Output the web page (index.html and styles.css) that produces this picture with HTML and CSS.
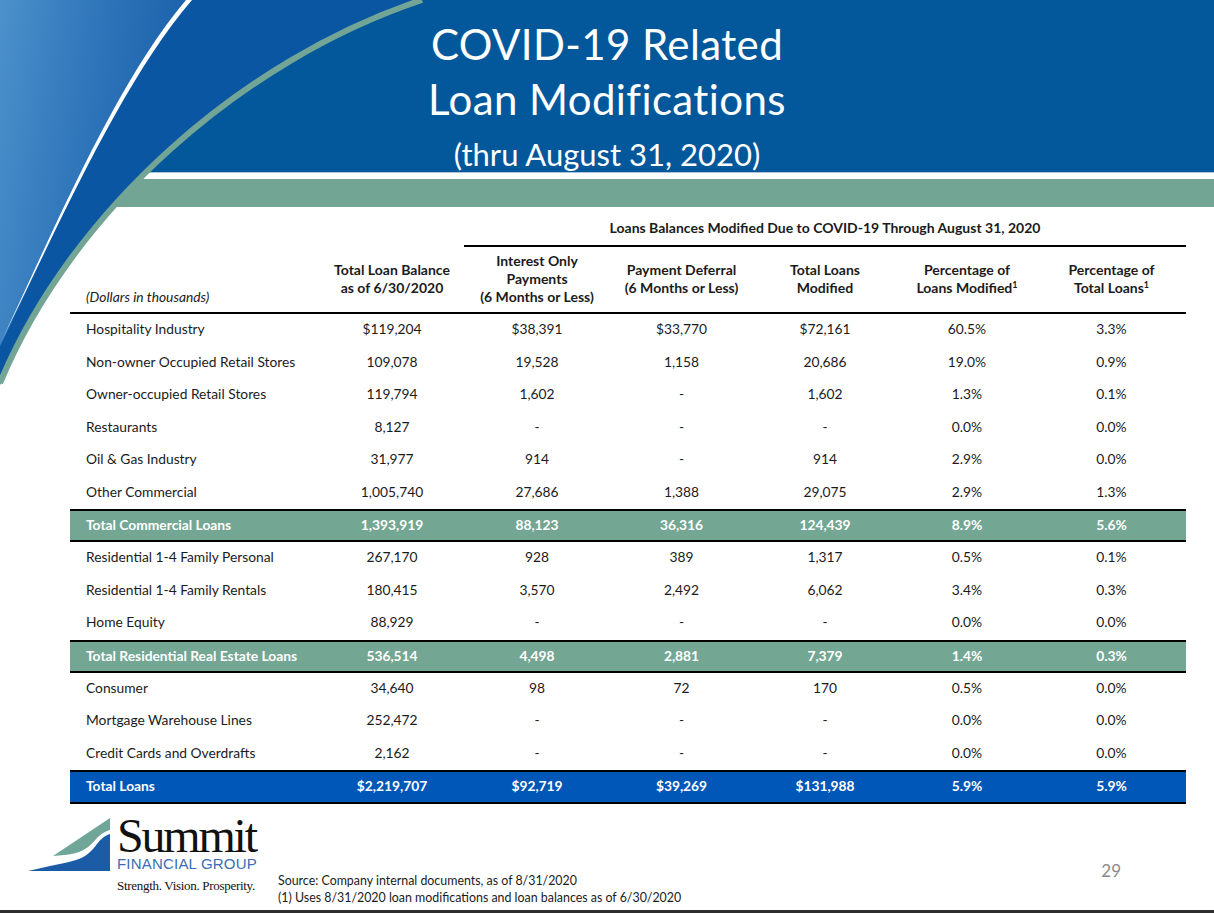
FILE: index.html
```html
<!DOCTYPE html>
<html lang="en">
<head>
<meta charset="utf-8">
<title>COVID-19 Related Loan Modifications</title>
<link rel="stylesheet" href="styles.css">
</head>
<body>
<div class="slide">
  <svg class="swoosh" viewBox="0 0 430 400" width="430" height="400" aria-hidden="true">
    <defs>
      <linearGradient id="lg" x1="0" y1="0" x2="1" y2="0.25">
        <stop offset="0" stop-color="#4c91cb"/>
        <stop offset="0.55" stop-color="#2c73b8"/>
        <stop offset="1" stop-color="#1960aa"/>
      </linearGradient>
    </defs>
    <path d="M0,0 H424 C244,60 74,210 0,385 Z" fill="#0a56a2"/>
    <path d="M0,0 H190 C121,80 61,220 4,338 L0,346 Z" fill="url(#lg)"/>
    <path d="M186,0 C118,80 58,220 2,340 C61,220 123,80 192,0 Z" fill="#ffffff"/>
    <path d="M422,0 C242,60 72,210 0,383" stroke="#72a596" stroke-width="6" fill="none"/>
  </svg>

  <header class="hero">
    <h1 class="title">COVID-19 Related<br>Loan Modifications</h1>
    <p class="subtitle">(thru August 31, 2020)</p>
  </header>
  <div class="rule-white"></div>
  <div class="rule-green"></div>

  <main class="content">
    <table class="loans">
      <colgroup>
        <col class="c-label">
        <col class="c-bal">
        <col class="c-io">
        <col class="c-def">
        <col class="c-tot">
        <col class="c-pm">
        <col class="c-pt">
      </colgroup>
      <thead>
        <tr class="super">
          <th colspan="2"></th>
          <th colspan="5" class="super-title">Loans Balances Modified Due to COVID-19 Through August 31, 2020</th>
        </tr>
        <tr class="cols">
          <th class="label"><em>(Dollars in thousands)</em></th>
          <th>Total Loan Balance<br>as of 6/30/2020</th>
          <th>Interest Only<br>Payments<br>(6 Months or Less)</th>
          <th>Payment Deferral<br>(6 Months or Less)</th>
          <th>Total Loans<br>Modified</th>
          <th>Percentage of<br>Loans Modified<sup>1</sup></th>
          <th>Percentage of<br>Total Loans<sup>1</sup></th>
        </tr>
      </thead>
      <tbody>
        <tr><td>Hospitality Industry</td><td>$119,204</td><td>$38,391</td><td>$33,770</td><td>$72,161</td><td>60.5%</td><td>3.3%</td></tr>
        <tr><td>Non-owner Occupied Retail Stores</td><td>109,078</td><td>19,528</td><td>1,158</td><td>20,686</td><td>19.0%</td><td>0.9%</td></tr>
        <tr><td>Owner-occupied Retail Stores</td><td>119,794</td><td>1,602</td><td>-</td><td>1,602</td><td>1.3%</td><td>0.1%</td></tr>
        <tr><td>Restaurants</td><td>8,127</td><td>-</td><td>-</td><td>-</td><td>0.0%</td><td>0.0%</td></tr>
        <tr><td>Oil &amp; Gas Industry</td><td>31,977</td><td>914</td><td>-</td><td>914</td><td>2.9%</td><td>0.0%</td></tr>
        <tr><td>Other Commercial</td><td>1,005,740</td><td>27,686</td><td>1,388</td><td>29,075</td><td>2.9%</td><td>1.3%</td></tr>
        <tr class="subtotal"><td>Total Commercial Loans</td><td>1,393,919</td><td>88,123</td><td>36,316</td><td>124,439</td><td>8.9%</td><td>5.6%</td></tr>
        <tr><td>Residential 1-4 Family Personal</td><td>267,170</td><td>928</td><td>389</td><td>1,317</td><td>0.5%</td><td>0.1%</td></tr>
        <tr><td>Residential 1-4 Family Rentals</td><td>180,415</td><td>3,570</td><td>2,492</td><td>6,062</td><td>3.4%</td><td>0.3%</td></tr>
        <tr><td>Home Equity</td><td>88,929</td><td>-</td><td>-</td><td>-</td><td>0.0%</td><td>0.0%</td></tr>
        <tr class="subtotal"><td>Total Residential Real Estate Loans</td><td>536,514</td><td>4,498</td><td>2,881</td><td>7,379</td><td>1.4%</td><td>0.3%</td></tr>
        <tr><td>Consumer</td><td>34,640</td><td>98</td><td>72</td><td>170</td><td>0.5%</td><td>0.0%</td></tr>
        <tr><td>Mortgage Warehouse Lines</td><td>252,472</td><td>-</td><td>-</td><td>-</td><td>0.0%</td><td>0.0%</td></tr>
        <tr><td>Credit Cards and Overdrafts</td><td>2,162</td><td>-</td><td>-</td><td>-</td><td>0.0%</td><td>0.0%</td></tr>
        <tr class="grand"><td>Total Loans</td><td>$2,219,707</td><td>$92,719</td><td>$39,269</td><td>$131,988</td><td>5.9%</td><td>5.9%</td></tr>
      </tbody>
    </table>
  </main>

  <footer class="foot">
    <div class="logo">
      <svg class="logo-mark" viewBox="0 0 86 56" width="86" height="56" aria-hidden="true">
        <path d="M82,0 L82,12 C75,14 72,17 68,21 C63,27 58,32 48,35 C40,37 33,37 25,38 Z" fill="#6fa697"/>
        <path d="M0,53 L82,53 L82,16 C76,18 73,21 69,26 C64,33 58,39 48,42 C38,45 30,46 22,48 Z" fill="#1c5ca7"/>
      </svg>
      <div class="logo-text">
        <div class="logo-name">Summit</div>
        <div class="logo-sub">FINANCIAL GROUP</div>
        <div class="logo-tag">Strength. Vision. Prosperity.</div>
      </div>
    </div>
    <div class="notes">
      <p>Source: Company internal documents, as of 8/31/2020</p>
      <p>(1) Uses 8/31/2020 loan modifications and loan balances as of 6/30/2020</p>
    </div>
    <div class="page-num">29</div>
  </footer>
  <div class="base-line"></div>
</div>
</body>
</html>
```

FILE: styles.css
```css
* { box-sizing: border-box; }

body {
  margin: 0;
  background: #ffffff;
}

.slide {
  position: relative;
  width: 1214px;
  height: 913px;
  overflow: hidden;
  background: #ffffff;
  font-family: "Lato", "Open Sans", sans-serif;
  color: #1b1b1b;
}

.swoosh {
  position: absolute;
  left: 0;
  top: 0;
  z-index: 1;
  pointer-events: none;
}

.hero {
  height: 172px;
  background: #03589b;
  color: #ffffff;
  text-align: center;
  padding-top: 17px;
}

.title {
  margin: 0;
  font-weight: 400;
  font-size: 42px;
  line-height: 55px;
  letter-spacing: 0.4px;
}

.subtitle {
  margin: 11px 0 0;
  font-size: 31px;
  line-height: 32px;
}

.rule-white {
  height: 7px;
  background: #ffffff;
  border-top: 1px solid #a9c5de;
}

.rule-green {
  height: 28px;
  background: #72a594;
}

.content {
  padding: 0 28px 0 70px;
}

.loans {
  width: 1116px;
  table-layout: fixed;
  border-collapse: separate;
  border-spacing: 0;
  font-size: 13.8px;
}

.c-label { width: 250px; }
.c-bal { width: 144px; }
.c-io { width: 146px; }
.c-def { width: 143px; }
.c-tot { width: 144px; }
.c-pm { width: 140px; }
.c-pt { width: 149px; }

.super th {
  padding: 12px 0 8px;
  line-height: 18px;
  font-weight: 700;
  font-size: 14px;
  vertical-align: bottom;
  text-align: center;
}

.super .super-title {
  border-bottom: 2px solid #000000;
}

.cols th {
  padding: 5px 0 6px;
  line-height: 18px;
  font-weight: 700;
  font-size: 14px;
  text-align: center;
  vertical-align: middle;
  border-bottom: 2px solid #000000;
}

.cols .label {
  text-align: left;
  padding-left: 16px;
  vertical-align: bottom;
  font-weight: 400;
  font-size: 13.8px;
}

.cols sup {
  font-size: 9px;
  line-height: 0;
  vertical-align: 5px;
}

.loans td {
  padding: 0 0 3px;
  line-height: 29.5px;
  text-align: center;
  white-space: nowrap;
}

.loans td:first-child {
  text-align: left;
  padding-left: 16px;
}

.subtotal td {
  background: #74a694;
  color: #ffffff;
  font-weight: 700;
  padding: 0 0 1px;
  line-height: 28px;
  border-top: 2px solid #000000;
  border-bottom: 2px solid #000000;
}

.grand td {
  background: #0057b8;
  color: #ffffff;
  font-weight: 700;
  padding: 0 0 2px;
  line-height: 28px;
  border-top: 2px solid #000000;
  border-bottom: 2px solid #000000;
}

.foot {
  display: flex;
  align-items: flex-end;
  height: 95px;
  margin-top: 11px;
  padding: 0 93px 4px 28px;
}

.logo {
  display: flex;
  align-items: flex-start;
  align-self: flex-start;
  width: 236px;
}

.logo-mark {
  flex: none;
  margin-top: 3px;
  margin-right: 3px;
}

.logo-text {
  display: flex;
  flex-direction: column;
}

.logo-name {
  font-family: "Liberation Serif", "Times New Roman", serif;
  font-size: 48px;
  line-height: 41px;
  letter-spacing: -2.2px;
  color: #111111;
}

.logo-sub {
  font-family: "Liberation Sans", Arial, sans-serif;
  font-size: 15px;
  line-height: 16px;
  letter-spacing: 0.2px;
  color: #3a6db5;
  white-space: nowrap;
}

.logo-tag {
  margin-top: 7px;
  font-family: "Liberation Serif", "Times New Roman", serif;
  font-size: 13px;
  line-height: 14px;
  letter-spacing: -0.3px;
  color: #111111;
  white-space: nowrap;
}

.notes {
  margin-left: 14px;
  font-size: 12.4px;
  line-height: 17px;
  color: #1b1b1b;
}

.notes p {
  margin: 0;
}

.page-num {
  margin-left: auto;
  align-self: flex-start;
  margin-top: 46px;
  font-size: 17px;
  line-height: 20px;
  color: #8a8a8a;
}

.base-line {
  height: 3px;
  background: #2e2e2e;
}
```
